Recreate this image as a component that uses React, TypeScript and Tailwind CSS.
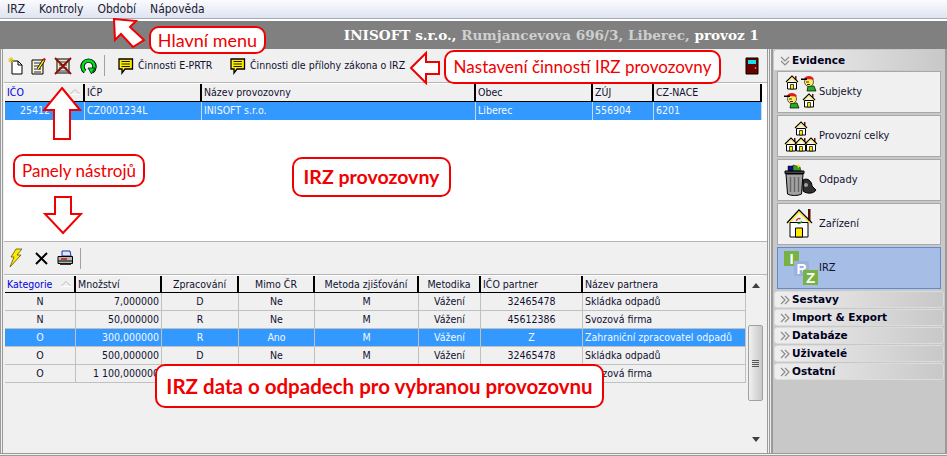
const UI = "font-['DejaVu_Sans_Condensed','DejaVu_Sans',sans-serif] [font-stretch:condensed]";

const topCols = [
  { name: 'IČO', w: 80, color: 'text-[#0000e0]', sort: true },
  { name: 'IČP', w: 117 },
  { name: 'Název provozovny', w: 274 },
  { name: 'Obec', w: 117 },
  { name: 'ZÚJ', w: 61 },
  { name: 'CZ-NACE', w: 108 },
];
const topRow = ['25412', 'CZ0001234L', 'INISOFT s.r.o.', 'Liberec', '556904', '6201'];

const botCols = [
  { name: 'Kategorie', w: 71, align: 'text-center', head: 'text-left', color: 'text-[#0000e0]', sort: true },
  { name: 'Množství', w: 86, align: 'text-right', head: 'text-left' },
  { name: 'Zpracování', w: 77, align: 'text-center', head: 'text-center' },
  { name: 'Mimo ČR', w: 76, align: 'text-center', head: 'text-center' },
  { name: 'Metoda zjišťování', w: 104, align: 'text-center', head: 'text-center' },
  { name: 'Metodika', w: 62, align: 'text-center', head: 'text-center' },
  { name: 'IČO partner', w: 102, align: 'text-center', head: 'text-left' },
  { name: 'Název partnera', w: 163, align: 'text-left', head: 'text-left' },
];
const botRows = [
  ['N', '7,000000', 'D', 'Ne', 'M', 'Vážení', '32465478', 'Skládka odpadů'],
  ['N', '50,000000', 'R', 'Ne', 'M', 'Vážení', '45612386', 'Svozová firma'],
  ['O', '300,000000', 'R', 'Ano', 'M', 'Vážení', 'Z', 'Zahraniční zpracovatel odpadů'],
  ['O', '500,000000', 'D', 'Ne', 'M', 'Vážení', '32465478', 'Skládka odpadů'],
  ['O', '1 100,000000', 'R', 'Ne', 'M', 'Vážení', '45612386', 'Svozová firma'],
];

function House({ x = 0, y = 0, s = 1 }: { x?: number; y?: number; s?: number }) {
  return (
    <g transform={`translate(${x} ${y}) scale(${s})`}>
      <path d="M10 1h1.500v4H10z" fill="#7a1010" />
      <path d="M1 7 7 1l6 6" fill="none" stroke="#000" strokeWidth="1.2" />
      <path d="M2 7.500 7 2.500l5 5" fill="none" stroke="#ffe900" strokeWidth="1" />
      <path d="M2.5 7.5h9V14h-9z" fill="#fff" stroke="#000" />
      <path d="M5.5 9.5h3V14h-3z" fill="#ffe900" stroke="#000" strokeWidth=".7" />
    </g>
  );
}

function Man({ x = 0, y = 0 }: { x?: number; y?: number }) {
  return (
    <g transform={`translate(${x} ${y})`}>
      <path d="M7 11h6l2 5H6z" fill="#22b022" stroke="#000" strokeWidth=".7" />
      <circle cx="8" cy="7" r="4.500" fill="#ffe96a" stroke="#000" strokeWidth=".6" />
      <path d="M3 4C4 0 12-.5 13 4.500Z" fill="#e21b1b" />
      <path d="M0 3.500h6V5H0z" fill="#000" />
      <path d="M5 7h3M6 9.500h3" stroke="#000" strokeWidth=".8" />
    </g>
  );
}

function Note() {
  return (
    <svg width="18" height="18" viewBox="0 0 18 18">
      <path d="M2 2h13.500v10H8l-3 4v-4H2z" fill="#ffee00" stroke="#000" strokeWidth="1.300" />
      <path d="M4.500 4.500h8.500M4.500 7h8.500M4.500 9.500h8.500" stroke="#000" strokeWidth=".9" />
    </svg>
  );
}

function SideIcon({ name }: { name: string }) {
  if (name === 'Subjekty')
    return (
      <svg width="34" height="34" viewBox="0 0 34 34">
        <House x={1} y={0} />
        <Man x={17} y={0} />
        <Man x={0} y={17} />
        <House x={18} y={18} />
      </svg>
    );
  if (name === 'Provozní celky')
    return (
      <svg width="34" height="34" viewBox="0 0 34 34">
        <House x={10} y={2} />
        <House x={0} y={18} />
        <House x={10} y={18} />
        <House x={20} y={18} />
      </svg>
    );
  if (name === 'Odpady')
    return (
      <svg width="34" height="34" viewBox="0 0 34 34">
        <path d="M4 3h5l2 5H4z" fill="#101080" stroke="#000" strokeWidth=".5" />
        <path d="M9 2l7 2 1 4H9z" fill="#2f9f2f" stroke="#000" strokeWidth=".5" />
        <path d="M13 1l4 2-3 2z" fill="#ffe900" />
        <path d="M1 8h19v2.500H1z" fill="#444" stroke="#000" />
        <path d="M2 11h17l-1.500 20c-3 2-11 2-14 0z" fill="#a2a2a2" stroke="#000" />
        <path d="M6.500 14v15M10.500 14v15M14.500 14v15" stroke="#666" strokeWidth="1.400" />
        <path d="M19 17c5-3 9 2 9 6l4 4c-2 4-10 4-13 1z" fill="#303030" stroke="#000" />
        <circle cx="22" cy="22" r="2" fill="#a0a0a0" />
      </svg>
    );
  if (name === 'Zařízení')
    return (
      <svg width="34" height="34" viewBox="0 0 34 34">
        <path d="M24 2h2.500v12H24z" fill="#5c0a0a" />
        <path d="M3 16 15 3l13 13" fill="none" stroke="#000" strokeWidth="1.300" />
        <path d="M5 16 15 5l11 11" fill="none" stroke="#ffe900" strokeWidth="1.200" />
        <path d="M6 15.500h18V30H6z" fill="#fff" stroke="#000" />
        <path d="M11.500 21h7v9h-7z" fill="#ffe900" stroke="#000" />
        <path d="M12.500 14a2.500 2.500 0 0 1 4-2" fill="none" stroke="#d22" strokeWidth="1.300" />
        <path d="M17.500 14a2.500 2.500 0 0 1-4 2" fill="none" stroke="#2a2" strokeWidth="1.300" />
      </svg>
    );
  return (
    <svg width="34" height="34" viewBox="0 0 34 34" className="font-['Liberation_Sans',sans-serif]">
      <rect x="0" y="0" width="15" height="15" fill="#77b243" />
      <text x="7.500" y="13" fontSize="15" fontWeight="700" textAnchor="middle" fill="#fff">I</text>
      <rect x="10" y="10" width="15" height="15" fill="#9bb0dc" />
      <text x="17.500" y="23" fontSize="14" fontWeight="700" textAnchor="middle" fill="#fff">R</text>
      <rect x="19" y="19" width="15" height="15" fill="#77b243" />
      <text x="26.500" y="32" fontSize="15" fontWeight="700" textAnchor="middle" fill="#fff">Z</text>
    </svg>
  );
}

function SectionHead({ title }: { title: string }) {
  return (
    <div className="flex h-[17px] items-center gap-[2px] rounded-[3px] border border-[#dcdcdc] bg-gradient-to-r from-[#efefef] to-[#c8c8c8] pl-[5px] font-['DejaVu_Sans',sans-serif] text-[10.500px] font-bold text-[#000020] [font-stretch:normal]">
      <Chevrons />
      {title}
    </div>
  );
}

function Chevrons({ down }: { down?: boolean }) {
  return (
    <svg width="10" height="10" viewBox="0 0 10 10" className={down ? 'rotate-90' : ''}>
      <path d="M1 1l4 4-4 4M5 1l4 4-4 4" fill="none" stroke="#8c8c8c" strokeWidth="1.200" />
    </svg>
  );
}

function SortMark() {
  return (
    <svg width="10" height="6" viewBox="0 0 10 6" className="absolute right-[3px] top-[5px]">
      <path d="M0 5.500 5 .5l5 5" fill="none" stroke="#bdbdbd" />
      <path d="M0 5.500h10" stroke="#fff" />
    </svg>
  );
}

function Callout({ className, children }: { className: string; children: string }) {
  return (
    <div
      className={`absolute flex items-center justify-center whitespace-nowrap rounded-[10px] border-[2px] border-[#f00000] bg-white font-['Lato',sans-serif] text-[#f00000] [font-stretch:normal] ${className}`}
    >
      {children}
    </div>
  );
}

function Arrow({ className, w, h, points }: { className: string; w: number; h: number; points: string }) {
  return (
    <svg width={w} height={h} viewBox={`0 0 ${w} ${h}`} className={`absolute ${className}`}>
      <polygon points={points} fill="#fff" stroke="#f00000" strokeWidth="2" />
    </svg>
  );
}

export default function App() {
  return (
    <div className={`relative flex h-[456px] w-[947px] flex-col overflow-hidden bg-[#f0f0f0] text-[10.500px] text-[#101030] ${UI}`}>
      {/* menu */}
      <div className="flex h-[19px] items-center gap-[14px] border-b border-[#a9a9b4] bg-gradient-to-b from-[#fafbfe] to-[#dfe4f2] pl-[7px] text-[12px] text-[#202030]">
        <span>IRZ</span>
        <span>Kontroly</span>
        <span>Období</span>
        <span>Nápověda</span>
      </div>
      <div className="h-[2px] bg-white" />
      {/* title */}
      <div className="flex h-[28px] items-center justify-end bg-[#808080] pr-[188px] font-['DejaVu_Serif',serif] text-[13.600px] font-bold text-[#fff] [font-stretch:normal]">
        <span className="whitespace-nowrap">
          INISOFT s.r.o., <span className="text-[#cfcfcf]">Rumjancevova 696/3, Liberec,</span> provoz 1
        </span>
      </div>

      <div className="flex min-h-0 flex-1 border-b-[3px] border-double border-[#9a9a9a]">
        {/* left */}
        <div className="flex w-[770px] flex-col border-l-[3px] border-r-[3px] border-double border-[#9a9a9a] pl-[1px]">
          <div className="flex h-[34px] items-center border-b border-[#b4b4b4] pl-[4px]">
            <div className="flex w-[96px] items-center gap-[7px]">
              <svg width="16" height="18" viewBox="0 0 16 18">
                <path d="M4 4h6l4 4v9H4z" fill="#fff" stroke="#000" />
                <path d="M10 4v4h4" fill="none" stroke="#000" />
                <path d="M3 0v6M0 3h6M1 1l4 4M5 1 1 5" stroke="#e0c000" strokeWidth=".9" />
              </svg>
              <svg width="16" height="18" viewBox="0 0 16 18">
                <path d="M1 3h11v14H1z" fill="#fff8c0" stroke="#000" />
                <path d="M3 6h7M3 9h7M3 12h7M3 15h7" stroke="#1020a0" />
                <path d="M7 12 13 3" stroke="#000" strokeWidth="3" />
                <path d="M7 12 13 3" stroke="#ffe900" strokeWidth="1.400" />
                <path d="M12.500 3.500 14 1.500" stroke="#d01010" strokeWidth="2.400" />
              </svg>
              <svg width="18" height="18" viewBox="0 0 18 18">
                <path d="M3 2h12v14H3z" fill="#f6eeb0" stroke="#000" />
                <path d="M5 5h8M5 8h8M5 11h8M5 14h8" stroke="#2030a0" />
                <path d="M1 1l16 16M17 1 1 17" stroke="#8a1010" strokeWidth="2" />
              </svg>
              <svg width="18" height="18" viewBox="0 0 18 18">
                <path d="M6 14.500a6 6 0 1 1 7 0" fill="none" stroke="#000" strokeWidth="4.400" />
                <path d="M6 14.500a6 6 0 1 1 7 0" fill="none" stroke="#00e020" strokeWidth="2.600" />
                <path d="M9 11h7l-3.500 6z" fill="#00e020" stroke="#000" strokeWidth=".7" />
              </svg>
            </div>
            <div className="mr-[12px] h-[21px] w-px bg-[#a0a0a0]" />
            <div className="flex items-center gap-[2px]">
              <Note />
              <span className="w-[90px] whitespace-nowrap pl-[1px]">Činnosti E-PRTR</span>
              <Note />
              <span className="whitespace-nowrap pl-[1px]">Činnosti dle přílohy zákona o IRZ</span>
            </div>
            <svg width="14" height="18" viewBox="0 0 14 18" className="ml-auto mr-[8px]">
              <path d="M1 1h12v16H1z" fill="#6b0000" stroke="#000" />
              <path d="M3 3h8v4H3z" fill="#19dcf0" />
              <circle cx="10.500" cy="11" r=".8" fill="#ffd000" />
            </svg>
          </div>

          {/* top grid */}
          <div className="flex h-[159px] flex-col border-b border-[#b4b4b4] bg-white pl-[1px] pt-[1px]">
            <div className="flex h-[18px] w-[757px] bg-[#f0f0f0]">
              {topCols.map((c) => (
                <div
                  key={c.name}
                  style={{ width: c.w }}
                  className={`relative border-b border-r-[2px] border-b-black border-r-black pl-[2px] leading-[17px] ${c.color ?? ''}`}
                >
                  {c.name}
                  {c.sort && <SortMark />}
                </div>
              ))}
            </div>
            <div className="flex h-[18px] w-[757px] bg-[#3399ff] text-[#f4f8ff]">
              {topRow.map((v, i) => (
                <div
                  key={v}
                  style={{ width: topCols[i].w }}
                  className={`border-r border-[#c8d8ea] pl-[2px] leading-[17px] ${i === 0 ? 'pl-[15px]' : ''}`}
                >
                  {v}
                </div>
              ))}
            </div>
          </div>

          {/* bottom toolbar */}
          <div className="flex h-[33px] items-center gap-[7px] border-b border-[#b4b4b4] pl-[3px]">
            <svg width="18" height="20" viewBox="0 0 18 20">
              <path d="M9 1 4 9h3l-4 10 11-12h-4l5-6z" fill="#ffe900" stroke="#5a5a00" strokeWidth=".8" />
            </svg>
            <svg width="15" height="15" viewBox="0 0 15 15" className="ml-[2px]">
              <path d="M2 2l11 11M13 2 2 13" stroke="#000" strokeWidth="2" />
            </svg>
            <svg width="16" height="16" viewBox="0 0 16 16" className="ml-px">
              <path d="M5 1h8l1 5H5z" fill="#dfe8ff" stroke="#1830a0" />
              <path d="M1 6.500h14.500v7H1z" fill="#b8b8b8" stroke="#000" />
              <path d="M3 13.500h11V15H3z" fill="#333" />
              <path d="M4 9h6" stroke="#d01010" strokeWidth="1.500" />
              <path d="M1 11h14" stroke="#000" />
            </svg>
            <div className="h-[21px] w-px bg-[#a0a0a0]" />
          </div>

          {/* bottom grid */}
          <div className="flex min-h-0 flex-1 pl-[1px]">
            <div className="w-[741px]">
              <div className="flex h-[18px] border-t border-white">
                {botCols.map((c) => (
                  <div
                    key={c.name}
                    style={{ width: c.w }}
                    className={`relative border-b border-r-[2px] border-b-black border-r-black px-[2px] leading-[16px] ${c.head} ${c.color ?? ''}`}
                  >
                    {c.name}
                    {c.sort && <SortMark />}
                  </div>
                ))}
              </div>
              {botRows.map((r, i) => (
                <div key={i} className={`flex h-[18px] border-b border-[#c0c0c0] ${i === 2 ? 'bg-[#3399ff] text-[#f4f8ff]' : ''}`}>
                  {r.map((v, j) => (
                    <div
                      key={j}
                      style={{ width: botCols[j].w }}
                      className={`overflow-hidden whitespace-nowrap border-r border-[#c0c0c0] px-[2px] leading-[17px] ${botCols[j].align}`}
                    >
                      {v}
                    </div>
                  ))}
                </div>
              ))}
            </div>
            {/* scrollbar */}
            <div className="ml-[2px] flex w-[15px] flex-col items-center border-t border-white">
              <svg width="8" height="5" viewBox="0 0 8 5" className="mt-[7px]">
                <path d="M0 5 4 0l4 5z" fill="#404040" />
              </svg>
              <div className="mt-[37px] flex h-[76px] w-[15px] flex-col items-center justify-center gap-px rounded-[2px] border border-[#a0a0a0] bg-gradient-to-r from-[#f0f0f0] to-[#c8c8c8]">
                <div className="h-px w-[7px] bg-[#555]" />
                <div className="h-px w-[7px] bg-[#555]" />
                <div className="h-px w-[7px] bg-[#555]" />
                <div className="h-px w-[7px] bg-[#555]" />
              </div>
              <svg width="8" height="5" viewBox="0 0 8 5" className="mt-[36px]">
                <path d="M0 0h8L4 5z" fill="#404040" />
              </svg>
            </div>
          </div>
        </div>

        {/* sidebar */}
        <div className="ml-[1px] flex flex-1 flex-col gap-px border-x-[2px] border-[#9a9a9a] bg-[#c8c8c8] px-[1px] pt-[1px]">
          <div className="flex h-[20px] items-center gap-[2px] rounded-t-[3px] bg-gradient-to-r from-[#f0f0f0] to-[#c8c8c8] pl-[6px] pt-px font-['DejaVu_Sans',sans-serif] text-[10.500px] font-bold text-[#000020] [font-stretch:normal]">
            <Chevrons down />
            Evidence
          </div>
          <div className="mx-[3px] flex flex-col gap-[2px]">
            {['Subjekty', 'Provozní celky', 'Odpady', 'Zařízení', 'IRZ'].map((n) => (
              <div
                key={n}
                className={`flex h-[42px] items-center border pl-[6px] text-[11px] ${n === 'IRZ' ? 'border-[#5d8ad8] bg-[#a6bde6]' : 'border-[#a8a8a8] bg-[#f0f0f0]'}`}
              >
                <SideIcon name={n} />
                <span className="pl-[1px]">{n}</span>
              </div>
            ))}
          </div>
          <div className="mt-[1px] flex flex-col gap-px">
            {['Sestavy', 'Import & Export', 'Databáze', 'Uživatelé', 'Ostatní'].map((n) => (
              <SectionHead key={n} title={n} />
            ))}
          </div>
        </div>
      </div>

      {/* annotations over the screen */}
      <Callout className="left-[149px] top-[26px] h-[28px] w-[117px] text-[18px]">Hlavní menu</Callout>
      <Callout className="left-[444px] top-[50px] h-[34px] w-[277px] text-[17px]">Nastavení činností IRZ provozovny</Callout>
      <Callout className="left-[13px] top-[154px] h-[33px] w-[132px] text-[17px]">Panely nástrojů</Callout>
      <Callout className="left-[292px] top-[157px] h-[40px] w-[159px] text-[19.500px] font-bold">IRZ provozovny</Callout>
      <Callout className="left-[155px] top-[364px] h-[44px] w-[449px] text-[20.500px] font-bold">IRZ data o odpadech pro vybranou provozovnu</Callout>
      <Arrow className="left-[112px] top-[17px]" w={34} h={32} points="2,2 24,4 18,10 32,23 21,30 9,17 3,23" />
      <Arrow className="left-[409px] top-[51px]" w={32} h={34} points="2,17 17,2 17,11 30,11 30,23 17,23 17,32" />
      <Arrow className="left-[42px] top-[86px]" w={40} h={55} points="20,2 38,24 28,24 28,53 12,53 12,24 2,24" />
      <Arrow className="left-[43px] top-[195px]" w={40} h={40} points="12,2 28,2 28,19 38,19 20,38 2,19 12,19" />
    </div>
  );
}
